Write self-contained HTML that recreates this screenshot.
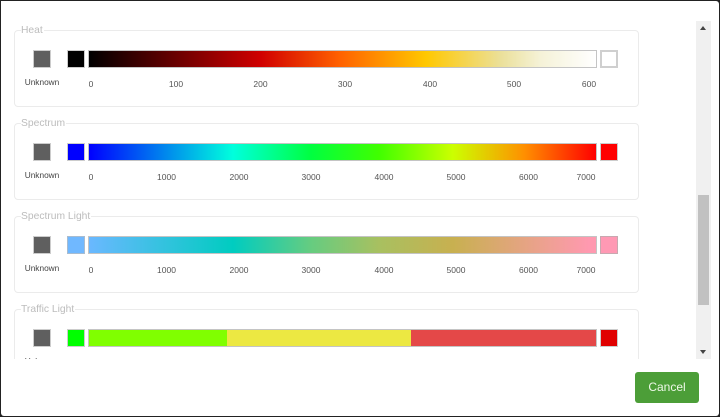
<!DOCTYPE html>
<html><head><meta charset="utf-8"><style>
html,body{margin:0;padding:0;background:#222}
body{width:720px;height:417px;overflow:hidden;position:relative;font-family:"Liberation Sans",sans-serif}
#dlg{position:absolute;left:1px;top:1px;width:718px;height:415px;background:#fff;border-radius:3px}
#clip{position:absolute;left:1px;top:1px;width:693px;height:357.500px;overflow:hidden;background:#fff}
#in{position:absolute;left:-1px;top:-1px;width:694px;height:359px;filter:blur(.3px)}
.fs{position:absolute;left:14px;width:623px;height:75px;border:1px solid #ebebeb;border-radius:4px;background:#fff}
.lg{position:absolute;left:21px;font-size:10.3px;line-height:12px;color:#bcbcbc;background:#fff;padding-right:1px;white-space:nowrap}
.sw{position:absolute;box-sizing:border-box;width:18px;height:18px;border:1px solid #ccc}
.bar{position:absolute;left:88px;width:508.500px;height:18px;box-sizing:border-box;border:1px solid #c4c4c4}
.t{position:absolute;font-size:8.5px;line-height:10px;color:#555;transform:translateX(-50%);white-space:nowrap}
.u{position:absolute;left:42px;font-size:8.3px;line-height:10px;color:#444;transform:translateX(-50%)}
#track{position:absolute;left:696px;top:21px;width:15px;height:338px;background:#f0f0f0}
#thumb{position:absolute;left:698px;top:195px;width:11px;height:110px;background:#c1c1c1}
#btn{position:absolute;left:635px;top:372px;width:64px;height:31px;background:#4c9e38;border-radius:3px;color:#eef8e8;font-size:12px;line-height:31px;text-align:center}
.ar{position:absolute;width:0;height:0;border-left:3.5px solid transparent;border-right:3.5px solid transparent}
</style></head><body>
<div id="dlg"></div>
<div id="clip"><div id="in">
<div class="fs" style="top:30px"></div><div class="lg" style="top:24.500px">Heat</div>
<div class="sw" style="left:33.300px;top:50px;background:#5f5f5f"></div>
<div class="sw" style="left:67px;top:50px;background:#000"></div>
<div class="bar" style="top:50px;background:linear-gradient(90deg,#000 0,#d00000 172px,#ff6000 250px,#ffc800 337px,#ebe09a 412px,#f5f2d8 452px,#fff 507px)"></div>
<div class="sw" style="left:599.600px;top:50px;background:#fff;border:2px solid #cfcfcf"></div>
<div class="u" style="top:77px">Unknown</div>
<div class="t" style="left:91px;top:79px">0</div><div class="t" style="left:176px;top:79px">100</div><div class="t" style="left:260.500px;top:79px">200</div><div class="t" style="left:345px;top:79px">300</div><div class="t" style="left:430px;top:79px">400</div><div class="t" style="left:514px;top:79px">500</div><div class="t" style="left:589px;top:79px">600</div>

<div class="fs" style="top:123px"></div><div class="lg" style="top:117.500px">Spectrum</div>
<div class="sw" style="left:33.300px;top:143px;background:#5f5f5f"></div>
<div class="sw" style="left:67px;top:143px;background:#0000ff"></div>
<div class="bar" style="top:143px;background:linear-gradient(90deg,#0000ff 0,#00ffdd 144px,#00ff40 222px,#40ff00 290px,#ccff00 364px,#ff9000 435px,#ff0000 507px)"></div>
<div class="sw" style="left:599.600px;top:143px;background:#ff0000"></div>
<div class="u" style="top:170px">Unknown</div>
<div class="t" style="left:91px;top:172px">0</div><div class="t" style="left:166.500px;top:172px">1000</div><div class="t" style="left:239px;top:172px">2000</div><div class="t" style="left:311px;top:172px">3000</div><div class="t" style="left:384px;top:172px">4000</div><div class="t" style="left:456px;top:172px">5000</div><div class="t" style="left:528.500px;top:172px">6000</div><div class="t" style="left:586px;top:172px">7000</div>

<div class="fs" style="top:216px"></div><div class="lg" style="top:210.500px">Spectrum Light</div>
<div class="sw" style="left:33.300px;top:236px;background:#5f5f5f"></div>
<div class="sw" style="left:67px;top:236px;background:#70b8ff;border-color:#a8bcd0"></div>
<div class="bar" style="top:236px;background:linear-gradient(90deg,#6ab8ff 0,#00ccc0 144px,#66cc80 222px,#a8c060 290px,#c8b050 364px,#ff99b0 500px)"></div>
<div class="sw" style="left:599.600px;top:236px;background:#ff99b4;border-color:#c8a8b0"></div>
<div class="u" style="top:263px">Unknown</div>
<div class="t" style="left:91px;top:265px">0</div><div class="t" style="left:166.500px;top:265px">1000</div><div class="t" style="left:239px;top:265px">2000</div><div class="t" style="left:311px;top:265px">3000</div><div class="t" style="left:384px;top:265px">4000</div><div class="t" style="left:456px;top:265px">5000</div><div class="t" style="left:528.500px;top:265px">6000</div><div class="t" style="left:586px;top:265px">7000</div>

<div class="fs" style="top:309px;height:90px"></div><div class="lg" style="top:303.500px">Traffic Light</div>
<div class="sw" style="left:33.300px;top:329px;background:#5f5f5f"></div>
<div class="sw" style="left:67px;top:329px;background:#00ff00"></div>
<div class="bar" style="top:329px;background:linear-gradient(90deg,#80ff00 0,#80ff00 138px,#ece842 138px,#ece842 322px,#e44848 322px,#e44848 507px)"></div>
<div class="sw" style="left:599.600px;top:329px;background:#e00000"></div>
<div class="u" style="top:356px">Unknown</div>
</div></div>
<div id="track"></div><div id="thumb"></div>
<div class="ar" style="left:700px;top:26px;border-bottom:4px solid #444"></div>
<div class="ar" style="left:700px;top:350px;border-top:4px solid #444"></div>
<div id="btn">Cancel</div>
</body></html>
